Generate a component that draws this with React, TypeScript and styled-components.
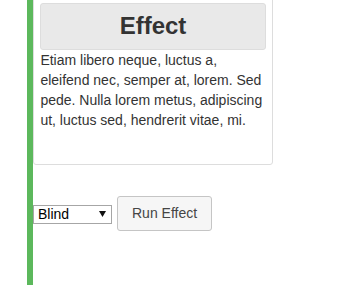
import React from "react";
import styled, { createGlobalStyle } from "styled-components";

const GlobalStyle = createGlobalStyle`
    html, body {
        margin: 0;
        padding: 0;
        background: #fff;
        overflow: hidden;
    }
    body {
        font-family: "Liberation Sans", Arial, sans-serif;
        font-size: 14px;
        line-height: 20px;
        color: #333;
    }
    * {
        box-sizing: border-box;
    }
`

const Page = styled.div`
    height: 285px;
    padding-left: 27px;
    display: flex;
`

const Column = styled.div`
    border-left: 6px solid #5cb85c;
    height: 100%;
    width: 260px;
    display: flex;
    flex-direction: column;
`

// card top is scrolled just past the top of the view
const EffectCard = styled.div`
    margin-top: -4.6px;
    width: 240px;
    height: 170px;
    padding: 6.4px;
    background: #fff;
    border: 1px solid #ddd;
    border-radius: 3px;
`

const Header = styled.h3`
    margin: 0;
    padding: 9.6px;
    font-size: 24px;
    line-height: 26.4px;
    font-weight: bold;
    text-align: center;
    color: #333;
    background: #e9e9e9;
    border: 1px solid #ddd;
    border-radius: 3px;
`

const Body = styled.p`
    margin: 0;
`

const Controls = styled.div`
    margin-top: 31px;
    display: flex;
    align-items: center;
    gap: 5px;
`

const SelectWrap = styled.div`
    position: relative;
    width: 79px;
    height: 19px;
`

const Select = styled.select`
    appearance: none;
    -webkit-appearance: none;
    width: 100%;
    height: 100%;
    margin: 0;
    padding: 0 0 0 4px;
    border: 1px solid #a6a6a6;
    border-radius: 0;
    background: #fff;
    color: #000;
    font-family: "Liberation Sans", Arial, sans-serif;
    font-size: 14px;
    line-height: 17px;
    outline: none;
`

const Arrow = styled.svg`
    position: absolute;
    right: 6px;
    top: 7px;
    pointer-events: none;
`

const RunButton = styled.button`
    margin: 0;
    padding: 7px 14px;
    font-family: "Liberation Sans", Arial, sans-serif;
    font-size: 14px;
    line-height: 19px;
    color: #454545;
    background: #f6f6f6;
    border: 1px solid #c5c5c5;
    border-radius: 3px;
    cursor: pointer;
`

export default function App() {
    const [effect, setEffect] = React.useState("blind");

    return (
        <React.Fragment>
            <GlobalStyle />
            <Page>
                <Column>
                    <EffectCard>
                        <Header>Effect</Header>
                        <Body>
                            Etiam libero neque, luctus a, eleifend nec, semper at, lorem. Sed pede. Nulla lorem metus, adipiscing ut, luctus sed, hendrerit vitae, mi.
                        </Body>
                    </EffectCard>
                    <Controls>
                        <SelectWrap>
                            <Select value={effect} onChange={(e) => setEffect(e.target.value)}>
                                <option value="blind">Blind</option>
                                <option value="bounce">Bounce</option>
                                <option value="clip">Clip</option>
                                <option value="drop">Drop</option>
                                <option value="explode">Explode</option>
                                <option value="fade">Fade</option>
                                <option value="fold">Fold</option>
                                <option value="highlight">Highlight</option>
                                <option value="puff">Puff</option>
                                <option value="pulsate">Pulsate</option>
                                <option value="scale">Scale</option>
                                <option value="shake">Shake</option>
                                <option value="size">Size</option>
                                <option value="slide">Slide</option>
                                <option value="transfer">Transfer</option>
                            </Select>
                            <Arrow width="7" height="6" viewBox="0 0 7 6">
                                <path d="M0 0 H7 L3.5 6 Z" fill="#111" />
                            </Arrow>
                        </SelectWrap>
                        <RunButton>Run Effect</RunButton>
                    </Controls>
                </Column>
            </Page>
        </React.Fragment>
    )
}
